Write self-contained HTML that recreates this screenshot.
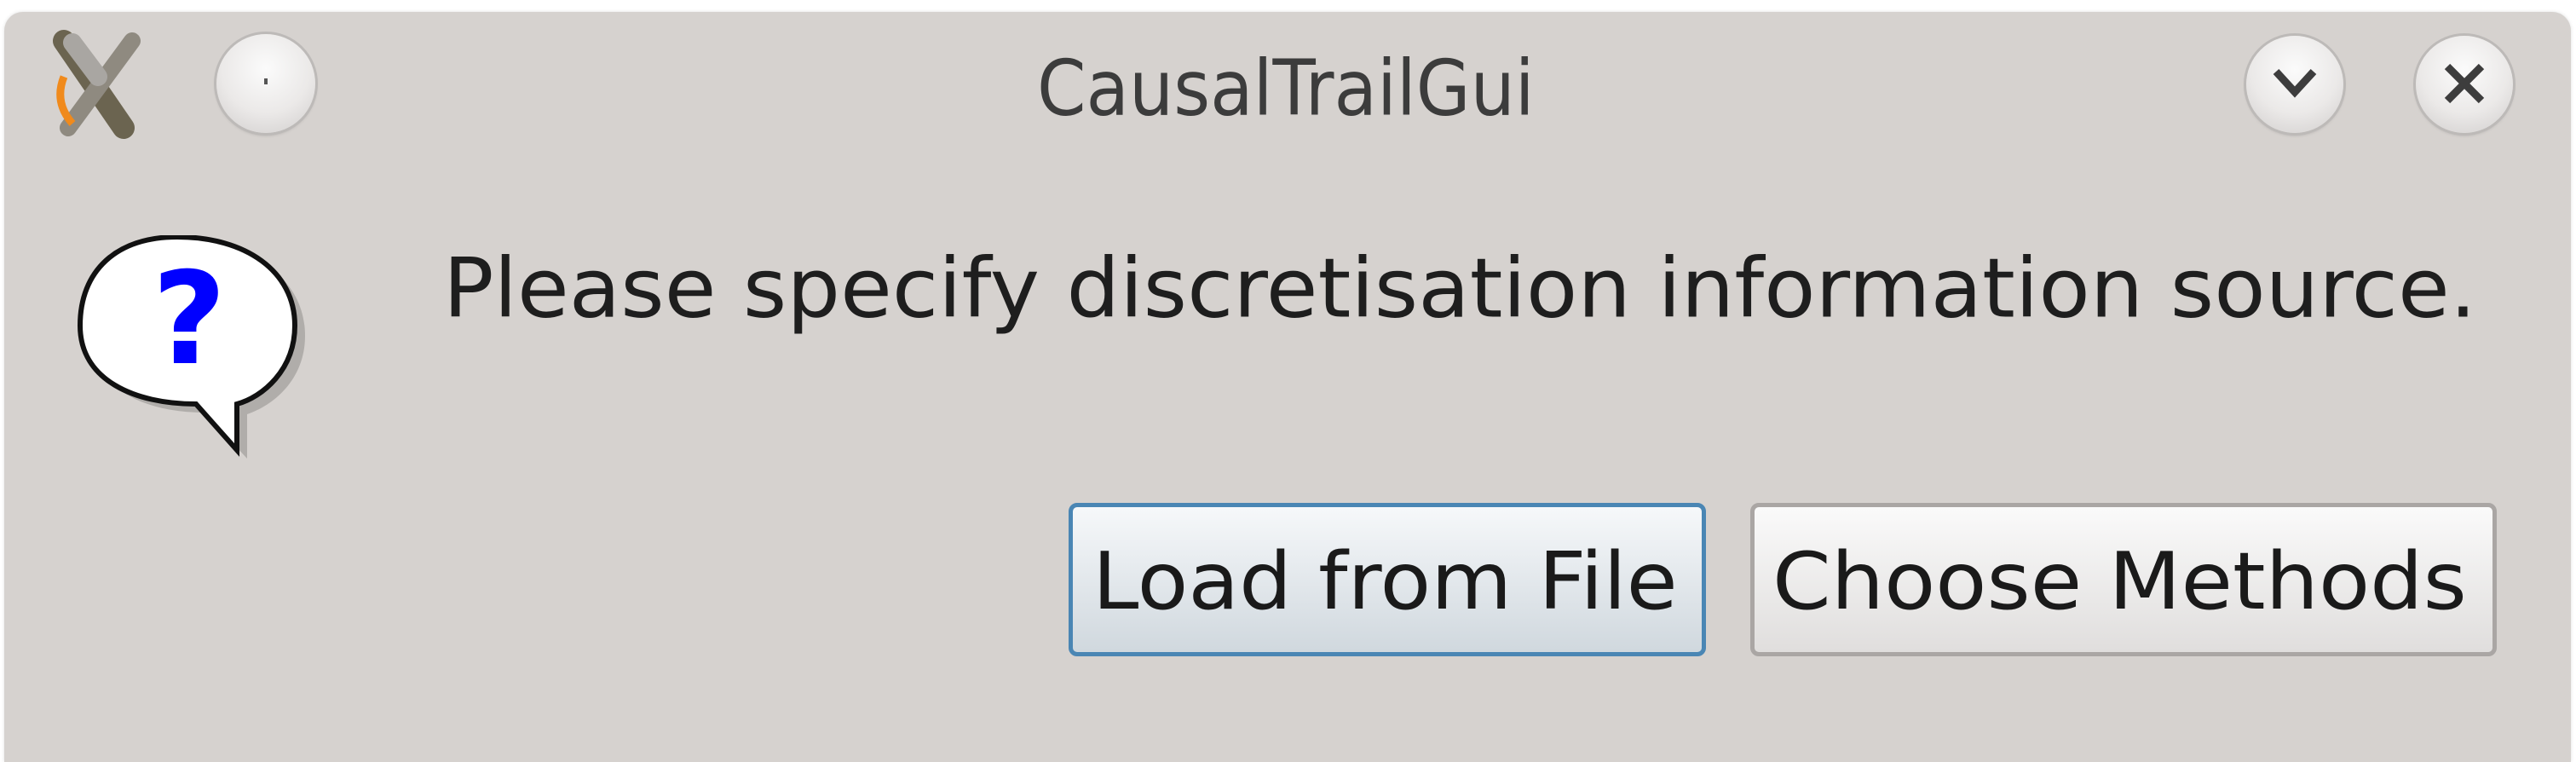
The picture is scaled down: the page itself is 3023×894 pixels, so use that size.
<!DOCTYPE html>
<html><head><meta charset="utf-8"><style>
html,body{margin:0;padding:0;width:3023px;height:877px;background:#fff;overflow:hidden;}
.win{position:absolute;left:5px;top:14px;width:3012px;height:880px;background:#d6d2cf;border-radius:22px 22px 0 0;box-shadow:0 0 4px rgba(0,0,0,.12);}
.t{position:absolute;font-family:"DejaVu Sans","Liberation Sans",sans-serif;white-space:nowrap;transform-origin:0 0;}
.btn{position:absolute;box-sizing:border-box;border-radius:10px;}
.circ{position:absolute;border-radius:50%;background:radial-gradient(circle at 50% 35%,#fbfbfb 0%,#ebe9e8 55%,#cfcccb 100%);box-shadow:0 0 0 3px #bdbab8,0 2px 4px rgba(0,0,0,.25);}
</style></head><body>
<div class="win"></div>

<svg style="position:absolute;left:55px;top:30px" width="125" height="135" viewBox="0 0 125 135">
<path d="M20 18 L90 120" stroke="#6b6450" stroke-width="26" stroke-linecap="round"/>
<path d="M100 18 L25 120" stroke="#8f8a80" stroke-width="20" stroke-linecap="round"/>
<path d="M30 20 L60 60" stroke="#a9a6a2" stroke-width="22" stroke-linecap="round"/>
<path d="M20 60 Q8 90 30 115" stroke="#f08a1c" stroke-width="9" fill="none"/>
</svg>
<div class="circ" style="left:254px;top:40px;width:116px;height:116px;"></div>
<div style="position:absolute;left:310px;top:92px;width:4px;height:7px;background:#555"></div>

<div class="t" style="left:1217px;top:52px;font-size:78px;color:#3c3c3c;transform:scale(1.056,1.16);">CausalTrailGui</div>

<div class="circ" style="left:2636px;top:42px;width:114px;height:114px;"></div>
<svg style="position:absolute;left:2663px;top:78px" width="60" height="45"><path d="M8 6 L30 30 L52 6" stroke="#3d3d3d" stroke-width="9" fill="none"/></svg>
<div class="circ" style="left:2835px;top:42px;width:114px;height:114px;"></div>
<svg style="position:absolute;left:2862px;top:68px" width="60" height="60"><path d="M10 10 L50 50 M50 10 L10 50" stroke="#3d3d3d" stroke-width="9"/></svg>

<svg style="position:absolute;left:90px;top:276px" width="280" height="275" viewBox="0 0 280 275">
<path d="M130 12 C210 12 268 52 268 118 C268 170 230 200 200 210 L200 262 L150 208 C80 208 18 180 18 118 C18 52 60 12 130 12 Z" fill="#a09c9a" opacity=".7"/>
<path d="M118 2 C198 2 256 42 256 106 C256 158 218 190 188 198 L188 252 L140 198 C68 198 4 170 4 106 C4 42 46 2 118 2 Z" fill="#fff" stroke="#111" stroke-width="6"/>
<text x="132" y="150" text-anchor="middle" font-family="DejaVu Sans,sans-serif" font-weight="bold" font-size="150" fill="#0000ff">?</text>
</svg>

<div class="t" style="left:520px;top:282px;font-size:83px;color:#1e1e1e;transform:scale(1.19,1.16);">Please specify discretisation information source.</div>

<div class="btn" style="left:1254px;top:590px;width:748px;height:180px;border:5px solid #4a86b4;background:linear-gradient(#f6f8fa,#d0d8de);"></div>
<div class="t" style="left:1282px;top:628px;font-size:80px;color:#1a1a1a;transform:scale(1.22,1.16);">Load from File</div>
<div class="btn" style="left:2054px;top:590px;width:876px;height:180px;border:5px solid #aaa6a4;background:linear-gradient(#fafafa,#e0dedd);"></div>
<div class="t" style="left:2080px;top:628px;font-size:80px;color:#1a1a1a;transform:scale(1.23,1.16);">Choose Methods</div>
</body></html>
